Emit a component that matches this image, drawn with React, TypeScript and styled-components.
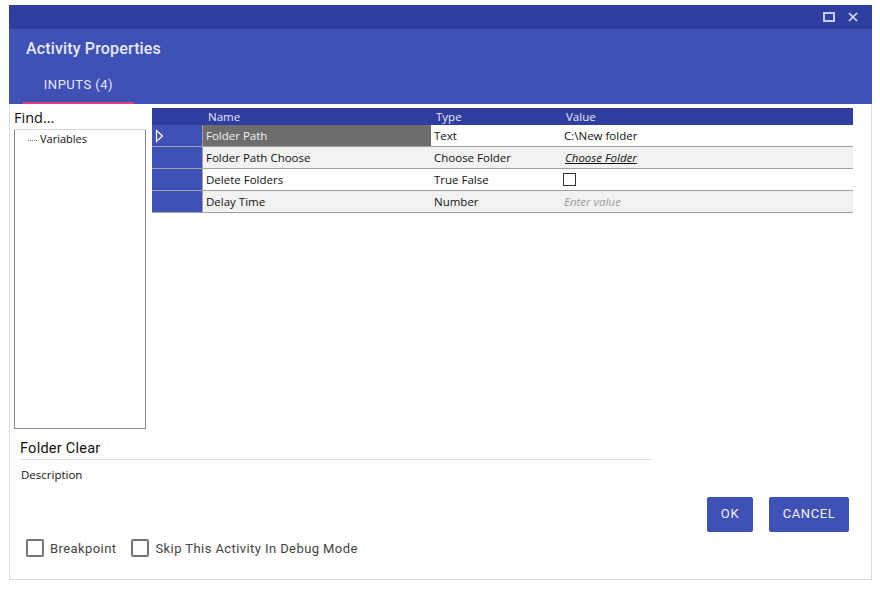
import React from 'react';
import styled, { createGlobalStyle } from 'styled-components';

const rows = [
  { name: 'Folder Path', type: 'Text', kind: 'text', value: 'C:\\New folder' },
  { name: 'Folder Path Choose', type: 'Choose Folder', kind: 'link', value: 'Choose Folder' },
  { name: 'Delete Folders', type: 'True False', kind: 'check', value: '' },
  { name: 'Delay Time', type: 'Number', kind: 'hint', value: 'Enter value' },
];

export default function App() {
  return (
    <Page>
      <GlobalStyle />
      <Dialog>
        <TitleBar>
          <svg width="12" height="10" viewBox="0 0 12 10">
            <rect x="1" y="1" width="10" height="8" fill="none" stroke="#c5cdf5" strokeWidth="2" />
          </svg>
          <svg width="10" height="10" viewBox="0 0 10 10">
            <path d="M1 1L9 9M9 1L1 9" stroke="#dfe3fa" strokeWidth="1.6" />
          </svg>
        </TitleBar>
        <Header>
          <Title>Activity Properties</Title>
          <Tab>INPUTS (4)</Tab>
        </Header>
        <Body>
          <Side>
            <Find>Find...</Find>
            <Tree>
              <TreeItem>
                <Dots />
                Variables
              </TreeItem>
            </Tree>
          </Side>
          <Grid>
            <HeadRow>
              <HeadCell $w={53} />
              <HeadCell $w={228}>Name</HeadCell>
              <HeadCell $w={130}>Type</HeadCell>
              <HeadCell>Value</HeadCell>
            </HeadRow>
            {rows.map((r, i) => (
              <Row key={r.name} $alt={i % 2 === 1}>
                <RowHead>
                  {i === 0 && (
                    <svg width="9" height="14" viewBox="0 0 9 14">
                      <path d="M1.5 1.5L7.5 7L1.5 12.5Z" fill="none" stroke="#fff" strokeWidth="1.2" />
                    </svg>
                  )}
                </RowHead>
                <NameCell $active={i === 0}>{r.name}</NameCell>
                <TypeCell>{r.type}</TypeCell>
                <ValueCell>
                  {r.kind === 'text' && r.value}
                  {r.kind === 'link' && <FolderLink>{r.value}</FolderLink>}
                  {r.kind === 'check' && <GridCheck />}
                  {r.kind === 'hint' && <Hint>{r.value}</Hint>}
                </ValueCell>
              </Row>
            ))}
          </Grid>
        </Body>
        <Info>
          <ActivityName>Folder Clear</ActivityName>
          <Description>Description</Description>
        </Info>
        <Actions>
          <Button $w={46}>OK</Button>
          <Button $w={80}>CANCEL</Button>
        </Actions>
        <Options>
          <Option>
            <Box />
            Breakpoint
          </Option>
          <Option>
            <Box />
            Skip This Activity In Debug Mode
          </Option>
        </Options>
      </Dialog>
    </Page>
  );
}

const GlobalStyle = createGlobalStyle`
  html, body {
    margin: 0;
    padding: 0;
    background: #fff;
  }
`;

const Page = styled.div`
  width: 880px;
  height: 589px;
  padding: 5px 8px 9px 9px;
  box-sizing: border-box;
  font-family: "Open Sans", "Noto Sans", sans-serif;
  color: #111;
`;

const Dialog = styled.div`
  height: 100%;
  box-sizing: border-box;
  border: 1px solid #dcdcdc;
  border-top: 0;
  display: flex;
  flex-direction: column;
`;

const TitleBar = styled.div`
  height: 24px;
  margin: 0 -1px;
  background: #303f9f;
  display: flex;
  align-items: center;
  justify-content: flex-end;
  gap: 13px;
  padding-right: 14px;
`;

const Header = styled.div`
  height: 75px;
  margin: 0 -1px;
  background: #3f51b5;
  color: #fff;
  display: flex;
  flex-direction: column;
  align-items: flex-start;
  font-family: Roboto, sans-serif;
`;

const Title = styled.div`
  font-size: 16px;
  font-weight: 500;
  letter-spacing: 0.15px;
  line-height: 20px;
  margin: 10px 0 0 17px;
  color: #e6e9f8;
`;

const Tab = styled.div`
  margin: 17px 0 0 14px;
  width: 111px;
  height: 29px;
  box-sizing: border-box;
  border-bottom: 2px solid #e83a80;
  text-align: center;
  font-size: 13px;
  font-weight: 400;
  letter-spacing: 0.5px;
  line-height: 17px;
  color: #e8eafa;
`;

const Body = styled.div`
  display: flex;
  padding: 4px 18px 0 4px;
`;

const Side = styled.div`
  width: 132px;
  display: flex;
  flex-direction: column;
`;

const Find = styled.div`
  font-size: 14.5px;
  line-height: 20px;
  height: 21px;
`;

const Tree = styled.div`
  height: 300px;
  box-sizing: border-box;
  border: 1px solid #8a8a8a;
  border-top-color: #d8d8d8;
  padding: 0 0 0 13px;
`;

const TreeItem = styled.div`
  display: flex;
  align-items: center;
  gap: 3px;
  font-size: 11px;
  line-height: 16px;
  margin-top: 1px;
`;

const Dots = styled.span`
  width: 9px;
  border-bottom: 1px dotted #777;
  margin-top: 3px;
`;

const Grid = styled.div`
  margin-left: 6px;
  width: 701px;
  display: flex;
  flex-direction: column;
`;

const HeadRow = styled.div`
  height: 17px;
  background: #303f9f;
  display: flex;
  color: #e6e8f8;
  font-size: 11.5px;
  line-height: 18px;
`;

const HeadCell = styled.div<{ $w?: number }>`
  ${(p) => (p.$w ? `width: ${p.$w}px;` : 'flex: 1;')}
  padding-left: 3px;
  box-sizing: border-box;
`;

const Row = styled.div<{ $alt: boolean }>`
  height: 22px;
  box-sizing: border-box;
  display: flex;
  font-size: 11.5px;
  line-height: 21px;
  border-bottom: 1px solid #a0a0a0;
  background: ${(p) => (p.$alt ? '#f2f2f2' : '#fff')};
`;

const RowHead = styled.div`
  width: 51px;
  margin-bottom: -1px;
  background: #3f51b5;
  border-bottom: 1px solid #a0a0a0;
  border-right: 1px solid #a0a0a0;
  display: flex;
  align-items: center;
  padding-left: 3px;
  box-sizing: border-box;
`;

const NameCell = styled.div<{ $active: boolean }>`
  width: 228px;
  padding-left: 3px;
  box-sizing: border-box;
  background: ${(p) => (p.$active ? '#6d6d6d' : 'transparent')};
  color: ${(p) => (p.$active ? '#f2f2f2' : '#111')};
`;

const TypeCell = styled.div`
  width: 130px;
  padding-left: 3px;
  box-sizing: border-box;
`;

const ValueCell = styled.div`
  flex: 1;
  padding-left: 3px;
  display: flex;
  align-items: center;
`;

const FolderLink = styled.span`
  font-style: italic;
  text-decoration: underline;
  margin-left: 1px;
`;

const GridCheck = styled.span`
  width: 13px;
  height: 13px;
  margin-left: -1px;
  box-sizing: border-box;
  border: 1px solid #333;
  background: #fff;
`;

const Hint = styled.span`
  font-style: italic;
  color: #9a9a9a;
`;

const Info = styled.div`
  margin: 10px 0 0 10px;
  width: 631px;
`;

const ActivityName = styled.div`
  font-family: Roboto, sans-serif;
  font-size: 14.5px;
  line-height: 20px;
  height: 20px;
  border-bottom: 1px solid #dedede;
  letter-spacing: 0.25px;
`;

const Description = styled.div`
  font-size: 11.5px;
  line-height: 16px;
  margin: 7px 0 0 1px;
`;

const Actions = styled.div`
  display: flex;
  justify-content: flex-end;
  gap: 16px;
  padding-right: 22px;
  margin-top: 14px;
`;

const Button = styled.button<{ $w: number }>`
  width: ${(p) => p.$w}px;
  height: 35px;
  padding: 0 0 2px;
  border: 0;
  border-radius: 2px;
  background: #3f51b5;
  color: #f1f2fb;
  font-family: Roboto, sans-serif;
  font-size: 13px;
  font-weight: 400;
  letter-spacing: 0.6px;
`;

const Options = styled.div`
  display: flex;
  gap: 15px;
  margin: 7px 0 0 16px;
`;

const Option = styled.div`
  display: flex;
  align-items: center;
  gap: 6px;
  font-family: Roboto, sans-serif;
  font-size: 13px;
  font-weight: 400;
  letter-spacing: 0.42px;
  color: #444;
`;

const Box = styled.span`
  width: 18px;
  height: 18px;
  box-sizing: border-box;
  border: 2px solid #757575;
  border-radius: 2px;
`;
